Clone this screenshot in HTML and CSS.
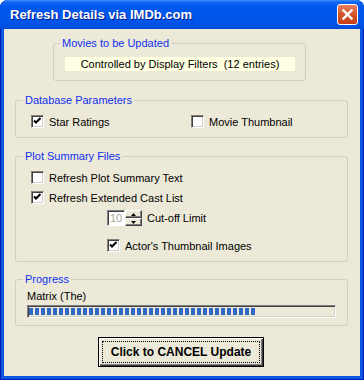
FILE: index.html
```html
<!DOCTYPE html>
<html lang="en">
<head>
    <meta charset="UTF-8">
    <title>Refresh Details via IMDb.com</title>
    <link rel="stylesheet" href="styles.css">
</head>
<body>
    <div class="window">
        <!-- Title bar -->
        <div class="titlebar">
            <span class="title">Refresh Details via IMDb.com</span>
            <span class="close">
                <svg width="13" height="13" viewBox="0 0 13 13">
                    <path d="M2.5 2.5 L10.5 10.5 M10.5 2.5 L2.5 10.5" stroke="#fff" stroke-width="2.4" stroke-linecap="square"/>
                </svg>
            </span>
        </div>

        <div class="client">
            <!-- Movies to be Updated -->
            <div class="group group-movies">
                <span class="group-title">Movies to be Updated</span>
                <div class="filter-note">Controlled by Display Filters&nbsp; (12 entries)</div>
            </div>

            <!-- Database Parameters -->
            <div class="group group-db">
                <span class="group-title">Database Parameters</span>
                <div class="db-row">
                    <label class="check">
                        <span class="box checked"><svg width="11" height="11" viewBox="0 0 11 11"><polyline points="2,4.5 4,6.5 8.5,2" fill="none" stroke="#000" stroke-width="2"/></svg></span>
                        Star Ratings
                    </label>
                    <label class="check">
                        <span class="box"></span>
                        Movie Thumbnail
                    </label>
                </div>
            </div>

            <!-- Plot Summary Files -->
            <div class="group group-plot">
                <span class="group-title">Plot Summary Files</span>
                <label class="check">
                    <span class="box"></span>
                    Refresh Plot Summary Text
                </label>
                <label class="check row-cast">
                    <span class="box checked"><svg width="11" height="11" viewBox="0 0 11 11"><polyline points="2,4.5 4,6.5 8.5,2" fill="none" stroke="#000" stroke-width="2"/></svg></span>
                    Refresh Extended Cast List
                </label>
                <div class="spin-row">
                    <span class="spin">
                        <span class="spin-text">10</span>
                        <span class="spin-buttons">
                            <span class="spin-btn"><svg width="5" height="3" viewBox="0 0 5 3"><path d="M0 3 L2.5 0 L5 3 Z" fill="#000"/></svg></span>
                            <span class="spin-btn"><svg width="5" height="3" viewBox="0 0 5 3"><path d="M0 0 L5 0 L2.5 3 Z" fill="#000"/></svg></span>
                        </span>
                    </span>
                    <span>Cut-off Limit</span>
                </div>
                <label class="check row-thumbs">
                    <span class="box checked"><svg width="11" height="11" viewBox="0 0 11 11"><polyline points="2,4.5 4,6.5 8.5,2" fill="none" stroke="#000" stroke-width="2"/></svg></span>
                    Actor's Thumbnail Images
                </label>
            </div>

            <!-- Progress -->
            <div class="group group-progress">
                <span class="group-title">Progress</span>
                <div class="progress-label">Matrix (The)</div>
                <div class="progress">
                    <div class="progress-fill" style="width: 228px;"></div>
                </div>
            </div>

            <!-- Cancel button -->
            <button class="cancel"><span class="cancel-focus">Click to CANCEL Update</span></button>
        </div>
    </div>
</body>
</html>
```

FILE: styles.css
```css
* {
    box-sizing: border-box;
}

body {
    margin: 0;
    background: #fff;
    font-family: "Liberation Sans", Arial, sans-serif;
    font-size: 11px;
    color: #000;
}

.window {
    width: 364px;
    height: 380px;
    display: flex;
    flex-direction: column;
    background: #0a56e4;
    border-radius: 8px 8px 0 0;
    overflow: hidden;
    box-shadow: inset 1px 0 #0019b0, inset -1px 0 #0019b0, inset 0 -1px #0019b0;
}

.titlebar {
    height: 29px;
    flex: none;
    display: flex;
    align-items: center;
    padding: 0 6px 0 10px;
    background: linear-gradient(to bottom, #3d90fa 0px, #1268f3 2px, #0058ee 6px, #0055ea 20px, #0050e2 27px, #0048d8 29px);
}

.title {
    flex: 1;
    color: #fff;
    font-weight: bold;
    font-size: 13px;
    text-shadow: 1px 1px #0a1f8c;
}

.close {
    width: 21px;
    height: 21px;
    display: flex;
    align-items: center;
    justify-content: center;
    border: 1px solid #fff;
    border-radius: 3px;
    background: linear-gradient(to bottom, #e8805f, #d4532c 50%, #c63c17);
}

.client {
    flex: 1;
    margin: 0 4px 4px 4px;
    background: #ece9d8;
    display: flex;
    flex-direction: column;
    align-items: flex-start;
}

/* group boxes */
.group {
    position: relative;
    border: 1px solid #d0d0bf;
    border-radius: 3px;
    margin-left: 11px;
    width: 333px;
}

.group-title {
    position: absolute;
    top: -7px;
    left: 7px;
    padding: 0 2px;
    line-height: 13px;
    background: #ece9d8;
    color: #1030f0;
}

.group-movies {
    margin-top: 14px;
    margin-left: 49px;
    width: 253px;
    padding: 13px 10px 9px 11px;
}

.group-movies .group-title {
    left: 6px;
}

.filter-note {
    height: 14px;
    line-height: 14px;
    background: #ffffe1;
    text-align: center;
}

.group-db {
    margin-top: 19px;
    padding: 14px 0 9px 15px;
}

.db-row {
    display: grid;
    grid-template-columns: 160px auto;
}

.group-plot {
    margin-top: 18px;
    padding: 14px 0 9px 15px;
}

.group-progress {
    margin-top: 17px;
    padding: 10px 0 7px 11px;
}

/* checkboxes */
.check {
    display: flex;
    align-items: center;
    gap: 5px;
    height: 13px;
}

.box {
    width: 13px;
    height: 13px;
    flex: none;
    border: 1px solid;
    border-color: #808080 #fff #fff #808080;
    box-shadow: inset 1px 1px #404040, inset -1px -1px #d4d0c8;
    background: #fff;
}

.box svg {
    display: block;
}

.row-cast {
    margin-top: 7px;
}

.row-thumbs {
    margin-top: 13px;
    margin-left: 76px;
}

/* spinner */
.spin-row {
    display: flex;
    align-items: center;
    gap: 5px;
    margin-top: 6px;
    margin-left: 76px;
    height: 16px;
}

.spin {
    display: flex;
    height: 16px;
}

.spin-text {
    width: 18px;
    height: 16px;
    padding-left: 2px;
    line-height: 14px;
    color: #aca899;
    background: #fff;
    border: 1px solid;
    border-color: #808080 #fff #fff #808080;
    box-shadow: inset 1px 1px #404040;
}

.spin-buttons {
    display: flex;
    flex-direction: column;
    width: 17px;
}

.spin-btn {
    height: 8px;
    display: flex;
    align-items: center;
    justify-content: center;
    background: #ece9d8;
    border: 1px solid;
    border-color: #fff #404040 #404040 #fff;
    box-shadow: inset -1px -1px #808080;
}

.spin-btn svg {
    display: block;
}

/* progress */
.progress-label {
    line-height: 13px;
    height: 13px;
}

.progress {
    margin-top: 2px;
    width: 309px;
    height: 13px;
    padding: 1px 0;
    border: 1px solid;
    border-color: #808080 #fff #fff #808080;
    box-shadow: inset 1px 1px #404040, inset -1px -1px #d4d0c8;
    padding: 2px 1px;
}

.progress-fill {
    height: 7px;
    background: repeating-linear-gradient(to right, #316ac5 0px, #316ac5 4px, transparent 4px, transparent 6px);
}

/* button */
.cancel {
    margin-top: 11px;
    margin-left: 94px;
    width: 166px;
    height: 30px;
    padding: 3px;
    background: #ece9d8;
    border: 1px solid #000;
    box-shadow: inset 1px 1px #fff, inset -1px -1px #404040, inset -2px -2px #808080;
    font-family: "Liberation Sans", Arial, sans-serif;
    font-size: 12px;
    font-weight: bold;
    color: #000;
}

.cancel-focus {
    display: flex;
    align-items: center;
    justify-content: center;
    height: 100%;
    border: 1px dotted #000;
}
```
